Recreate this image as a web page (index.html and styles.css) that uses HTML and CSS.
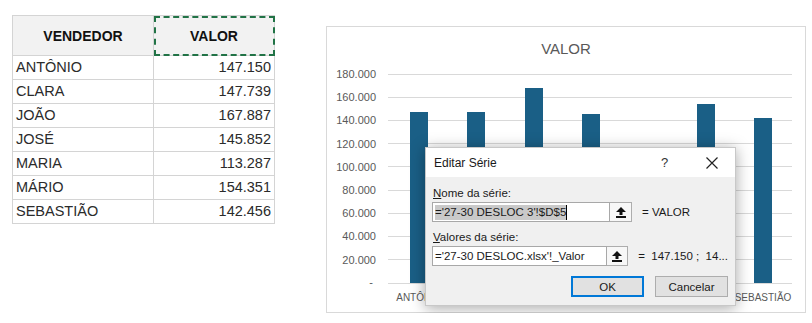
FILE: index.html
```html
<!DOCTYPE html>
<html lang="pt-BR">
<head>
    <meta charset="UTF-8">
    <title>Editar Série</title>
    <link rel="stylesheet" href="styles.css">
</head>
<body>
    <div class="page">
        <table class="sheet">
            <tr>
                <th class="name-head">VENDEDOR</th>
                <th class="value-head">VALOR</th>
            </tr>
            <tr><td>ANTÔNIO</td><td class="num">147.150</td></tr>
            <tr><td>CLARA</td><td class="num">147.739</td></tr>
            <tr><td>JOÃO</td><td class="num">167.887</td></tr>
            <tr><td>JOSÉ</td><td class="num">145.852</td></tr>
            <tr><td>MARIA</td><td class="num">113.287</td></tr>
            <tr><td>MÁRIO</td><td class="num">154.351</td></tr>
            <tr><td>SEBASTIÃO</td><td class="num">142.456</td></tr>
        </table>

        <div class="chart">
            <svg class="plot" width="478" height="285" viewBox="0 0 478 285">
                <text class="title" x="239" y="27">VALOR</text>
                <g class="grid">
                    <line x1="61" y1="47.5" x2="465" y2="47.5"/>
                    <line x1="61" y1="70.5" x2="465" y2="70.5"/>
                    <line x1="61" y1="93.5" x2="465" y2="93.5"/>
                    <line x1="61" y1="116.5" x2="465" y2="116.5"/>
                    <line x1="61" y1="139.5" x2="465" y2="139.5"/>
                    <line x1="61" y1="163.5" x2="465" y2="163.5"/>
                    <line x1="61" y1="186.5" x2="465" y2="186.5"/>
                    <line x1="61" y1="209.5" x2="465" y2="209.5"/>
                    <line x1="61" y1="232.5" x2="465" y2="232.5"/>
                    <line x1="61" y1="256.5" x2="465" y2="256.5"/>
                </g>
                <g class="axis">
                    <text x="49" y="51">180.000</text>
                    <text x="49" y="74">160.000</text>
                    <text x="49" y="97">140.000</text>
                    <text x="49" y="121">120.000</text>
                    <text x="49" y="144">100.000</text>
                    <text x="49" y="167">80.000</text>
                    <text x="49" y="190">60.000</text>
                    <text x="49" y="213">40.000</text>
                    <text x="49" y="237">20.000</text>
                    <text x="46" y="259">-</text>
                </g>
                <g class="bars">
                    <rect x="83" y="85" width="18" height="171"/>
                    <rect x="140" y="85" width="18" height="171"/>
                    <rect x="198" y="61" width="18" height="195"/>
                    <rect x="255" y="87" width="18" height="169"/>
                    <rect x="312" y="124" width="18" height="132"/>
                    <rect x="370" y="77" width="18" height="179"/>
                    <rect x="427" y="91" width="18" height="165"/>
                </g>
                <g class="cats">
                    <text x="92" y="274">ANTÔNIO</text>
                    <text x="149" y="274">CLARA</text>
                    <text x="207" y="274">JOÃO</text>
                    <text x="264" y="274">JOSÉ</text>
                    <text x="321" y="274">MARIA</text>
                    <text x="379" y="274">MÁRIO</text>
                    <text x="436" y="274">SEBASTIÃO</text>
                </g>
            </svg>

            <div class="dialog">
                <div class="dialog-head">
                    <span class="dialog-title">Editar Série</span>
                    <span class="help">?</span>
                    <svg class="close" width="12" height="12" viewBox="0 0 12 12">
                        <path d="M0.5 0.5 L11.5 11.5 M11.5 0.5 L0.5 11.5"/>
                    </svg>
                </div>
                <div class="dialog-body">
                    <div class="label"><u>N</u>ome da série:</div>
                    <div class="field-row">
                        <div class="field"><span class="selected">='27-30 DESLOC 3'!$D$5</span><span class="caret"></span></div>
                        <div class="ref-btn">
                            <svg width="10" height="11" viewBox="0 0 10 11"><path d="M5 0 L10 5 H6.5 V8 H3.5 V5 H0 Z"/><rect x="0" y="9" width="10" height="2"/></svg>
                        </div>
                        <span class="result">= VALOR</span>
                    </div>
                    <div class="label label-second"><u>V</u>alores da série:</div>
                    <div class="field-row">
                        <div class="field">='27-30 DESLOC.xlsx'!_Valor</div>
                        <div class="ref-btn">
                            <svg width="10" height="11" viewBox="0 0 10 11"><path d="M5 0 L10 5 H6.5 V8 H3.5 V5 H0 Z"/><rect x="0" y="9" width="10" height="2"/></svg>
                        </div>
                        <span class="result">=  147.150 ;  14...</span>
                    </div>
                    <div class="buttons">
                        <button class="btn btn-default">OK</button>
                        <button class="btn">Cancelar</button>
                    </div>
                </div>
            </div>
        </div>
    </div>
</body>
</html>
```

FILE: styles.css
```css
body {
    margin: 0;
    background-color: #ffffff;
    font-family: "Liberation Sans", Arial, sans-serif;
}
.page {
    display: flex;
    align-items: flex-start;
    padding: 15px 0 0 12px;
}

/* spreadsheet */
.sheet {
    border-collapse: collapse;
    font-size: 14.5px;
    color: #2b2b2b;
}
.sheet th,
.sheet td {
    border: 1px solid #d4d4d4;
    padding: 0 3px;
}
.sheet th {
    height: 39px;
    background-color: #f2f2f2;
    font-weight: bold;
    font-size: 14px;
    color: #111111;
}
.sheet td {
    height: 23px;
    padding: 0 3px;
    line-height: 23px;
}
.name-head {
    width: 134px;
}
.value-head {
    width: 114px;
    outline: 2px dashed #217346;
    outline-offset: -2px;
}
.num {
    text-align: right;
    padding-right: 6px;
}

/* chart */
.chart {
    position: relative;
    margin: 11px 0 0 51px;
    width: 480px;
    height: 287px;
    box-sizing: border-box;
    border: 1px solid #d9d9d9;
}
.plot {
    display: block;
    font-family: "Liberation Sans", Arial, sans-serif;
}
.plot .title {
    font-size: 15px;
    fill: #595959;
    text-anchor: middle;
}
.plot .grid line {
    stroke: #d9d9d9;
    stroke-width: 1;
}
.plot .axis text {
    font-size: 11px;
    fill: #595959;
    text-anchor: end;
}
.plot .bars rect {
    fill: #1a5f86;
}
.plot .cats text {
    font-size: 10px;
    fill: #595959;
    text-anchor: middle;
}

/* dialog */
.dialog {
    position: absolute;
    left: 98px;
    top: 120px;
    width: 311px;
    height: 159px;
    box-sizing: border-box;
    border: 1px solid #c8c8c8;
    background-color: #f0f0f0;
    box-shadow: 0 2px 14px rgba(0, 0, 0, 0.35);
    font-size: 11.5px;
    color: #1a1a1a;
}
.dialog-head {
    display: flex;
    align-items: center;
    height: 29px;
    padding-left: 8px;
    background-color: #ffffff;
}
.dialog-title {
    flex: 1;
    font-size: 12px;
}
.help {
    width: 20px;
    margin-right: 25px;
    font-size: 13px;
    color: #333333;
}
.close {
    margin-right: 17px;
}
.close path {
    stroke: #222222;
    stroke-width: 1.2;
    fill: none;
}
.dialog-body {
    padding: 8px 7px 0 6px;
}
.label {
    height: 16px;
    line-height: 16px;
    padding-left: 1px;
}
.label u {
    text-decoration-thickness: 1px;
}
.label-second {
    margin-top: 7px;
}
.field-row {
    display: flex;
    align-items: center;
    margin-top: 1px;
}
.field {
    width: 178px;
    height: 20px;
    box-sizing: border-box;
    border: 1px solid #a8a8a8;
    background-color: #ffffff;
    padding: 0 2px;
    line-height: 18px;
    white-space: nowrap;
    overflow: hidden;
    display: flex;
    align-items: center;
}
.selected {
    background-color: #c9c9c9;
    line-height: 15px;
}
.caret {
    display: inline-block;
    width: 1px;
    height: 15px;
    background-color: #000000;
}
.ref-btn {
    width: 22px;
    height: 20px;
    box-sizing: border-box;
    border: 1px solid #adadad;
    border-left: none;
    background-color: #f7f7f7;
    display: flex;
    align-items: center;
    justify-content: center;
}
.ref-btn svg {
    fill: #111111;
}
.result {
    margin-left: 10px;
    white-space: pre;
}
.buttons {
    display: flex;
    justify-content: flex-end;
    gap: 11px;
    margin-top: 10px;
}
.btn {
    width: 73px;
    height: 21px;
    box-sizing: border-box;
    border: 1px solid #adadad;
    background-color: #e1e1e1;
    font-family: "Liberation Sans", Arial, sans-serif;
    font-size: 11.5px;
    color: #1a1a1a;
    padding: 0;
}
.btn-default {
    border: 2px solid #0078d7;
}
```
